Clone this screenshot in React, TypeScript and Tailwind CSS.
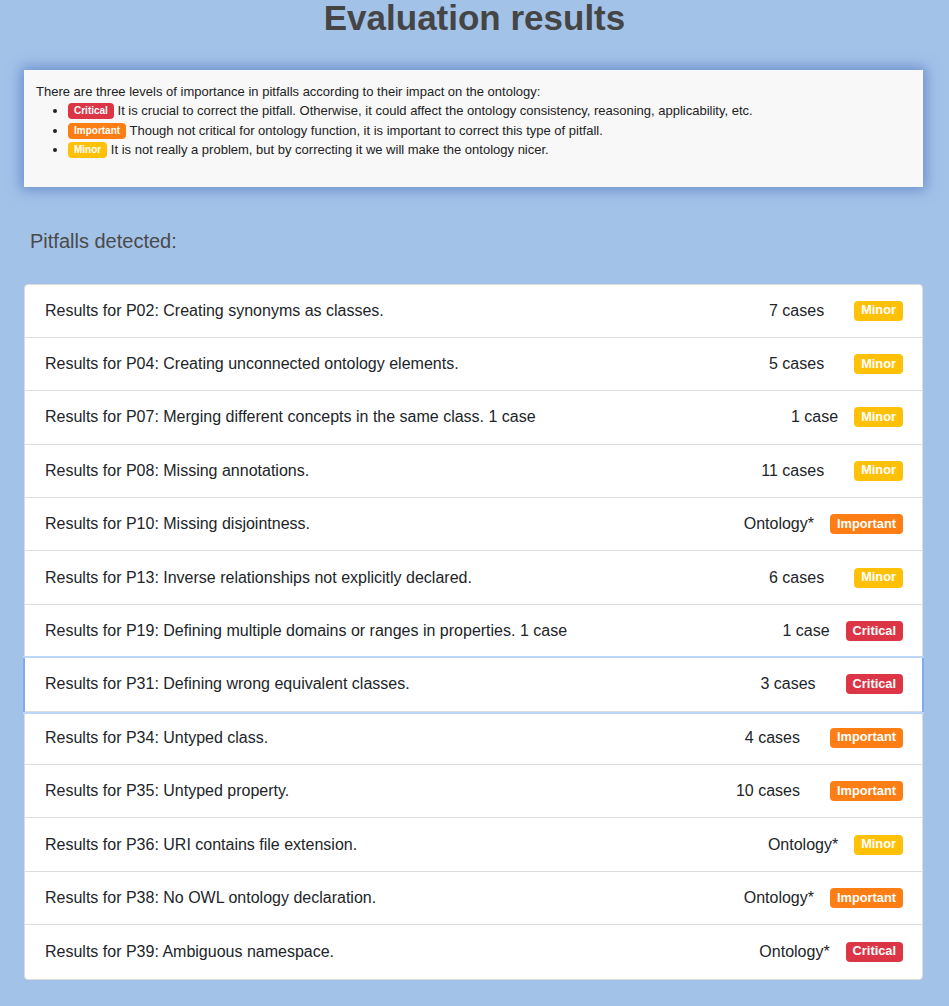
import React from "react";

type Level = "Minor" | "Important" | "Critical";

const rows: { text: string; count: string; level: Level; extra?: boolean; active?: boolean }[] = [
  { text: "Results for P02: Creating synonyms as classes.", count: "7 cases", level: "Minor", extra: true },
  { text: "Results for P04: Creating unconnected ontology elements.", count: "5 cases", level: "Minor", extra: true },
  { text: "Results for P07: Merging different concepts in the same class. 1 case", count: "1 case", level: "Minor" },
  { text: "Results for P08: Missing annotations.", count: "11 cases", level: "Minor", extra: true },
  { text: "Results for P10: Missing disjointness.", count: "Ontology*", level: "Important" },
  { text: "Results for P13: Inverse relationships not explicitly declared.", count: "6 cases", level: "Minor", extra: true },
  { text: "Results for P19: Defining multiple domains or ranges in properties. 1 case", count: "1 case", level: "Critical" },
  { text: "Results for P31: Defining wrong equivalent classes.", count: "3 cases", level: "Critical", extra: true, active: true },
  { text: "Results for P34: Untyped class.", count: "4 cases", level: "Important", extra: true },
  { text: "Results for P35: Untyped property.", count: "10 cases", level: "Important", extra: true },
  { text: "Results for P36: URI contains file extension.", count: "Ontology*", level: "Minor" },
  { text: "Results for P38: No OWL ontology declaration.", count: "Ontology*", level: "Important" },
  { text: "Results for P39: Ambiguous namespace.", count: "Ontology*", level: "Critical" },
];

function Badge({ level, small }: { level: Level; small?: boolean }) {
  const color =
    level === "Minor" ? "bg-[#ffc107]" : level === "Important" ? "bg-[#fd7e14]" : "bg-[#dc3545]";
  const size = small
    ? "text-[10px] h-[16px] px-[6px] rounded-[4px] align-[1px]"
    : "text-[12.8px] h-[20px] px-[7px] rounded-[4px]";
  return (
    <span className={`inline-flex items-center font-bold text-white leading-none ${color} ${size}`}>
      {level}
    </span>
  );
}

export default function App() {
  return (
    <div
      className="min-h-[1006px] bg-[#a3c2e8] text-[#212529]"
      style={{ fontFamily: '"Liberation Sans", Arial, sans-serif' }}
    >
      <h1 className="text-center text-[35px] font-bold text-[#454545] leading-[36px] pt-[0px]">
        Evaluation results
      </h1>
      <div className="ml-[24px] mr-[26px] mt-[34px] bg-[#f8f8f8] shadow-[0_0_12px_3px_rgba(60,100,180,0.55)] pl-[12px] pr-[12px] pt-[12px] pb-[27px] text-[13px] leading-[19px] text-[#222]">
        <div>There are three levels of importance in pitfalls according to their impact on the ontology:</div>
        <ul className="list-disc pl-[32px]">
          <li className="h-[19.5px]">
            <Badge level="Critical" small /> It is crucial to correct the pitfall. Otherwise, it could affect the ontology consistency, reasoning, applicability, etc.
          </li>
          <li className="h-[19.5px]">
            <Badge level="Important" small /> Though not critical for ontology function, it is important to correct this type of pitfall.
          </li>
          <li className="h-[19.5px]">
            <Badge level="Minor" small /> It is not really a problem, but by correcting it we will make the ontology nicer.
          </li>
        </ul>
      </div>
      <div className="pl-[30px] mt-[42px] text-[20px] text-[#4a4a4a] leading-[24px]">Pitfalls detected:</div>
      <div className="ml-[24px] mr-[26px] mt-[31px] bg-white border border-[#dcdcdc] rounded-[4px] text-[16px]">
        {rows.map((r, i) => (
          <div
            key={i}
            className={`flex items-center h-[53.4px] pl-[20px] pr-[19px] ${
              i < rows.length - 1 ? "border-b border-[#dddddd]" : ""
            } ${
              r.active
                ? "relative z-10 shadow-[-2px_0_0_0_#80acef,2px_0_0_0_#80acef,0_0_0_2px_#bdd6f8]"
                : ""
            }`}
          >
            <span className="flex-1">{r.text}</span>
            <span className={r.extra ? "mr-[30px]" : "mr-[16px]"}>{r.count}</span>
            <Badge level={r.level} />
          </div>
        ))}
      </div>
    </div>
  );
}
